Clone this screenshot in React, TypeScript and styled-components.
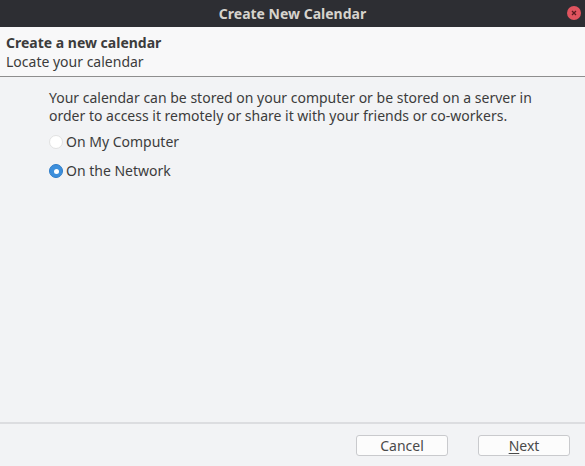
import styled, { createGlobalStyle } from "styled-components";

const Global = createGlobalStyle`
  html, body { margin: 0; padding: 0; }
  body {
    width: 585px;
    height: 466px;
    overflow: hidden;
    font-family: "Noto Sans", "DejaVu Sans", sans-serif;
    background: #f2f3f5;
  }
`;

const Window = styled.div`
  display: flex;
  flex-direction: column;
  width: 585px;
  height: 466px;
`;

const TitleBar = styled.div`
  position: relative;
  height: 27px;
  flex: none;
  display: flex;
  align-items: center;
  justify-content: center;
  background: #2d2e33;
  color: #d6d3cd;
  font-weight: bold;
  font-size: 14px;
`;

const CloseBtn = styled.span`
  position: absolute;
  right: 4px;
  top: 6px;
  width: 14px;
  height: 14px;
  border-radius: 50%;
  background: #e0545f;
  display: flex;
  align-items: center;
  justify-content: center;
`;

const Header = styled.div`
  flex: none;
  height: 50px;
  padding: 6px 6px 0;
  box-sizing: border-box;
  background: #f8f8f9;
  border-bottom: 1px solid #8e8e8e;
  color: #3c3c3c;
  font-size: 14px;
`;

const HeaderTitle = styled.div`
  font-weight: bold;
  line-height: 19px;
`;

const HeaderSub = styled.div`
  line-height: 19px;
`;

const Body = styled.div`
  flex: 1;
  padding: 12px 20px 0 49px;
  color: #3c3c3c;
  font-size: 14px;
`;

const Intro = styled.p`
  margin: 0;
  line-height: 18px;
`;

const Options = styled.div`
  display: flex;
  flex-direction: column;
  gap: 11px;
  margin-top: 8px;
`;

const Option = styled.label`
  display: flex;
  align-items: center;
  gap: 3px;
  line-height: 18px;
`;

const Radio = styled.span<{ $checked?: boolean }>`
  width: 14px;
  height: 14px;
  box-sizing: border-box;
  border-radius: 50%;
  background: ${(p) => (p.$checked ? "#3d8fdc" : "#ffffff")};
  border: 1px solid ${(p) => (p.$checked ? "#2f7cc8" : "#e2e2e2")};
  display: flex;
  align-items: center;
  justify-content: center;
  &::after {
    content: "";
    display: ${(p) => (p.$checked ? "block" : "none")};
    width: 5px;
    height: 5px;
    border-radius: 50%;
    background: #ffffff;
  }
`;

const Footer = styled.div`
  flex: none;
  height: 44px;
  box-sizing: border-box;
  border-top: 2px solid #dcdde0;
  display: flex;
  justify-content: flex-end;
  align-items: center;
  gap: 30px;
  padding: 0 15px 0 0;
`;

const Button = styled.button`
  width: 92px;
  height: 21px;
  padding: 0;
  border: 1px solid #c9cacd;
  border-radius: 3px;
  background: #fcfcfc;
  color: #4a4a4a;
  font-family: inherit;
  font-size: 14px;
  line-height: 19px;
  u { text-decoration: underline; text-underline-offset: 2px; }
`;

export default function App() {
  return (
    <Window>
      <Global />
      <TitleBar>
        Create New Calendar
        <CloseBtn>
          <svg width="6" height="6" viewBox="0 0 6 6">
            <path d="M1 1L5 5M5 1L1 5" stroke="#5a1b20" strokeWidth="1.3" />
          </svg>
        </CloseBtn>
      </TitleBar>
      <Header>
        <HeaderTitle>Create a new calendar</HeaderTitle>
        <HeaderSub>Locate your calendar</HeaderSub>
      </Header>
      <Body>
        <Intro>
          Your calendar can be stored on your computer or be stored on a server in
          <br />
          order to access it remotely or share it with your friends or co-workers.
        </Intro>
        <Options>
          <Option>
            <Radio />
            On My Computer
          </Option>
          <Option>
            <Radio $checked />
            On the Network
          </Option>
        </Options>
      </Body>
      <Footer>
        <Button>Cancel</Button>
        <Button>
          <u>N</u>ext
        </Button>
      </Footer>
    </Window>
  );
}
